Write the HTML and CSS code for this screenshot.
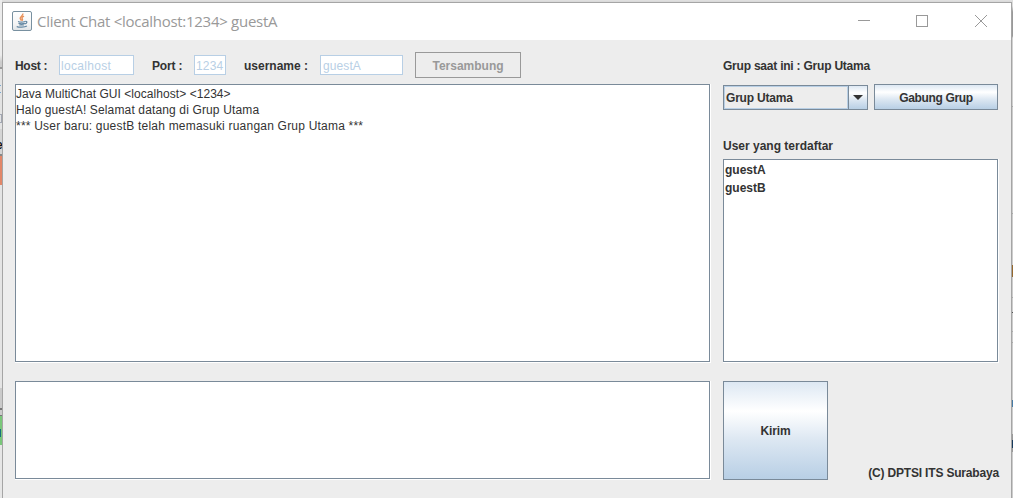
FILE: index.html
```html
<!DOCTYPE html>
<html lang="id">
<head>
<meta charset="utf-8">
<title>Client Chat</title>
<link rel="stylesheet" href="styles.css">
</head>
<body>
<div class="desktop">
  <div class="edge edge-left"><i class="glyph-a"></i><i class="glyph-b"></i><i class="letter">e</i><i class="teal"></i></div>
  <main class="window">
    <header class="titlebar">
      <svg class="java" width="20" height="20" viewBox="0 0 20 20">
        <defs><linearGradient id="tile" x2="0" y2="1"><stop stop-color="#fff"/><stop offset=".65" stop-color="#f5f5f5"/><stop offset="1" stop-color="#dfe3e6"/></linearGradient></defs>
        <rect x=".5" y=".5" width="19" height="19" rx="1.5" fill="url(#tile)" stroke="#7890a0"/>
        <path d="M10.800 2.600c.8 2.100-3.300 3-2.600 5 .3.900 1 1.300 1.200 2M12 5.200c-1.700.8-2.600 1.600-1.700 2.800.5.7.2 1.200-.3 1.700" fill="none" stroke="#e8915a" stroke-width="1.400"/>
        <path d="M6 10.500c1.800.7 5 .7 7 0M6.500 12.400c2 .6 4.200.6 6.200 0M7.300 14h4.600M13.200 10.500c2.500-.4 2 1.700-.4 2.400M4.700 15.400c1.500 1.100 8.200 1.100 10.200-.3" fill="none" stroke="#6488a3" stroke-width="1.200"/>
      </svg>
      <h1 class="title">Client Chat &lt;localhost:1234&gt; guestA</h1>
      <svg class="controls" width="130" height="14" viewBox="0 0 130 14" fill="none" stroke="#999" shape-rendering="crispEdges">
        <path d="M0 6.500h12"/><rect x="58.500" y="1.500" width="11" height="11"/><path d="M117 1l12 12M129 1l-12 12" shape-rendering="auto"/>
      </svg>
    </header>
    <div class="content">
      <section class="left">
        <form class="toolbar">
          <label class="t-host">Host :</label><span class="field f-host">localhost</span>
          <label class="t-port">Port :</label><span class="field f-port">1234</span>
          <label class="t-user">username :</label><span class="field f-user">guestA</span>
          <span class="connected">Tersambung</span>
        </form>
        <div class="pane log"><div class="inner">
          <p class="l1">Java MultiChat GUI &lt;localhost&gt; &lt;1234&gt;</p>
          <p class="l2">Halo guestA! Selamat datang di Grup Utama</p>
          <p class="l3">*** User baru: guestB telah memasuki ruangan Grup Utama ***</p>
        </div></div>
        <div class="pane compose"><div class="inner"></div></div>
      </section>
      <aside class="right">
        <div class="current">Grup saat ini : Grup Utama</div>
        <div class="group-row">
          <div class="combo"><div class="value">Grup Utama</div><div class="arrow"><svg width="10" height="5" viewBox="0 0 10 5"><path d="M0 0h10L5 5z" fill="#333"/></svg></div></div>
          <div class="button join">Gabung Grup</div>
        </div>
        <div class="users-label">User yang terdaftar</div>
        <div class="pane users"><div class="inner"><p>guestA</p><p>guestB</p></div></div>
        <div class="send-row"><div class="button send">Kirim</div><div class="copyright">(C) DPTSI ITS Surabaya</div></div>
      </aside>
    </div>
  </main>
  <div class="edge edge-right"></div>
</div>
</body>
</html>
```
FILE: styles.css
```css
* { box-sizing: border-box; }
body { margin: 0; overflow: hidden; font: bold 12px/16px "Liberation Sans", Arial, sans-serif; color: #333; }
p, h1 { margin: 0; }
svg { display: block; flex: none; }
.desktop { display: flex; width: 1013px; height: 498px; background: #e2e2e2; }
.edge { position: relative; flex: none; overflow: hidden; }
.edge-left { width: 2px; background: linear-gradient(#ececec 0 55px, #ccc 62px 67px, #999 67px 69px, #e3e3e3 69px 129px, #d4d4d4 129px 154px, #888 154px 156px, #e28769 156px 185px, #e4e4e4 185px 388px, #cacaca 388px 408px, #777 408px 410px, #ccc 410px 415px, #777 415px 416px, #7ac77a 416px 445px, #e6e6e6 445px); }
.edge i { position: absolute; }
.glyph-a { left: 0; top: 85px; width: 1px; height: 8px; border-top: 1px solid #79a8d0; border-bottom: 1px solid #79a8d0; }
.glyph-b { left: 0; top: 114px; width: 2px; height: 9px; border: 1px solid #a2a7b3; border-left: 0; }
.letter { left: -4px; top: 137px; font-style: normal; color: #111; }
.teal { left: 0; top: 429px; width: 1px; height: 8px; background: #15717b; }
.edge-right { width: 1px; background: linear-gradient(#ddd 0 6px, #999 12px 36px, #d0d0d0 38px 106px, #aaa 106px 107px, #ccc 107px 213px, #aaa 213px 214px, #ccc 214px 265px, #95682d 265px 277px, #ccc 277px 297px, #aaa 297px 298px, #ccc 298px 312px, #555 312px 313px, #ccc 313px 331px, #aaa 331px 332px, #ccc 332px 342px, #aaa 342px 343px, #ccc 343px 400px, #467ba5 400px 407px, #ccc 407px 434px, #999 434px 440px, #173a5c 440px 448px, #999 448px 452px, #ccc 452px); }
.window { display: flex; flex-direction: column; width: 1010px; height: 496px; margin-top: 2px; border: 1px solid #a5a5a5; border-bottom: 0; background: #ededed; flex: none; box-shadow: 0 0 3px #ccc; }
.titlebar { display: flex; align-items: center; height: 37px; flex: none; padding: 0 23px 2px 9px; background: #fff; }
.title { margin-left: 5px; font: 400 15px/22px "Open Sans", "Noto Sans", sans-serif; letter-spacing: -.28px; color: #999; white-space: nowrap; }
.controls { margin: 0 0 0 auto; }
.content { display: grid; grid-template-columns: 696px 276px; column-gap: 12px; padding: 12px 0 0 12px; }
.left { display: grid; grid-template-rows: 32px 279px 18px 99px; }
.compose { grid-row: 4; }
.toolbar { display: flex; align-items: center; height: 26px; white-space: nowrap; }
.toolbar label { flex: none; padding-top: 1px; }
.t-host { width: 44px; letter-spacing: -.3px; }
.t-port { width: 42px; margin-left: 18px; letter-spacing: -.15px; }
.t-user { width: 76px; margin-left: 18px; }
.field { height: 20px; padding: 0 0 0 2px; border: 1px solid #b8cfe5; background: #fff; color: #b8cfe5; font-weight: 400; line-height: 20px; }
.f-host { width: 75px; padding-left: 1px; letter-spacing: .3px; }
.f-port { width: 32px; padding-left: 1px; letter-spacing: .2px; }
.f-user { width: 83px; letter-spacing: .1px; }
.connected { width: 106px; height: 26px; margin-left: 12px; border: 1px solid #999; color: #999; line-height: 26px; text-align: center; }
.pane { border: solid #fff; border-width: 0 1px 1px 0; }
.inner { height: 100%; border: 1px solid #7a8a99; background: #fff; white-space: nowrap; }
.log .inner { padding-top: 1px; font-weight: 400; }
.l1 { letter-spacing: .05px; }
.l2 { letter-spacing: .14px; }
.l3 { letter-spacing: .21px; }
.right { display: grid; grid-template-rows: 32px 26px 49px 204px 18px 99px; white-space: nowrap; }
.current { padding-top: 6px; letter-spacing: -.22px; }
.group-row { display: flex; align-items: flex-end; gap: 6px; }
.combo { display: flex; width: 145px; height: 25px; border: 1px solid #7a8a99; }
.value { width: 124px; border: 1px solid #b8cfe5; padding-left: 1px; line-height: 22px; letter-spacing: -.2px; }
.arrow { display: grid; place-items: center; flex: 1; border-left: 1px solid #7a8a99; background: linear-gradient(#dde8f3, #fff 30%, #dce7f2 60%, #b8cfe5); }
.button { display: flex; align-items: center; justify-content: center; border: 1px solid #7a8a99; background: linear-gradient(#dde8f3, #fff 30%, #dce7f2 60%, #b8cfe5); }
.join { width: 124px; height: 26px; padding-top: 1px; letter-spacing: -.35px; }
.users-label { padding-top: 28px; }
.users .inner { padding: 1px 0 0 1px; line-height: 18px; }
.send-row { display: flex; grid-row: 6; justify-content: space-between; align-items: flex-end; }
.send { width: 105px; height: 99px; letter-spacing: -.1px; }
.copyright { height: 15px; letter-spacing: -.18px; }
```
